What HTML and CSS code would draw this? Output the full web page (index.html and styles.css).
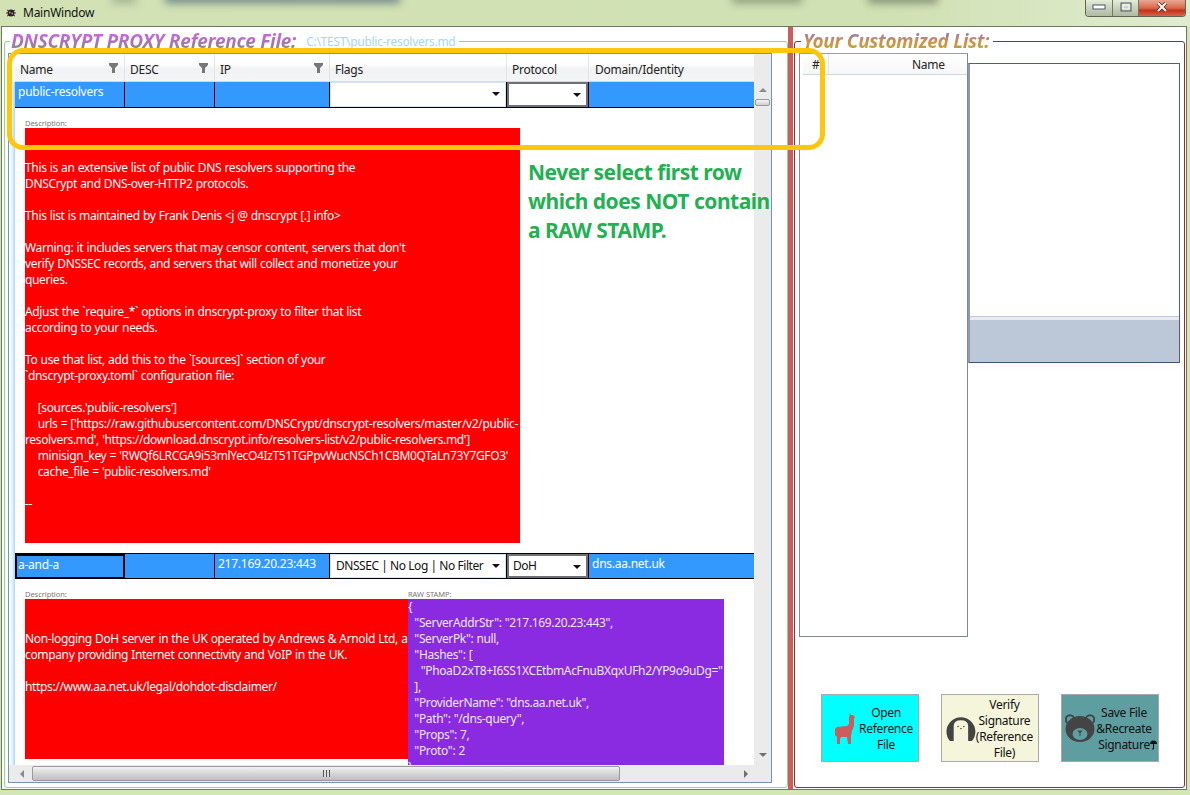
FILE: index.html
```html
<!DOCTYPE html>
<html lang="en">
<head>
    <meta charset="UTF-8">
    <title>MainWindow</title>
    <link rel="stylesheet" href="styles.css">
</head>
<body>
    <div class="titlebar">
        <span class="glass glass-d"></span>
        <span class="glass glass-a"></span>
        <span class="glass glass-b"></span>
        <span class="glass glass-c"></span>
        <svg class="app-icon" width="10" height="10" viewBox="0 0 10 10">
            <ellipse cx="5" cy="5" rx="3.4" ry="3.6" fill="#222"/>
            <path d="M1 2l2 1M9 2L7 3M0 5h2M10 5H8M1 8l2-1M9 8L7 7" stroke="#333" stroke-width="1"/>
            <circle cx="3.8" cy="4.4" r="1" fill="#e06a9a"/>
            <circle cx="6.2" cy="5.6" r="1" fill="#e06a9a"/>
        </svg>
        <span class="app-title">MainWindow</span>
        <div class="win-buttons">
            <div class="win-btn win-min">
                <svg width="14" height="6" viewBox="0 0 14 6"><rect x="1" y="1" width="12" height="4" fill="#fff" stroke="#4c566a"/></svg>
            </div>
            <div class="win-btn win-max">
                <svg width="12" height="10" viewBox="0 0 12 10"><rect x="1" y="1" width="10" height="8" fill="none" stroke="#4c566a"/><rect x="3" y="3" width="6" height="4" fill="none" stroke="#fff"/></svg>
            </div>
            <div class="win-btn win-close">
                <svg width="12" height="10" viewBox="0 0 12 10"><path d="M2 1l8 8M10 1L2 9" stroke="#5c2018" stroke-width="3.4"/><path d="M2 1l8 8M10 1L2 9" stroke="#fff" stroke-width="2"/></svg>
            </div>
        </div>
    </div>

    <div class="client">
        <fieldset class="group group-left">
            <legend class="group-legend">
                <span class="legend-text legend-left">DNSCRYPT PROXY Reference File:</span>
                <span class="legend-path">C:\TEST\public-resolvers.md</span>
            </legend>
            <div class="grid">
                <div class="grid-main">
                    <div class="cols grid-head">
                        <div class="head-cell">Name<svg class="funnel" width="10" height="10" viewBox="0 0 10 10"><path d="M0 0h9v2L6 5v5H3V5L0 2z"/></svg></div>
                        <div class="head-cell">DESC<svg class="funnel" width="10" height="10" viewBox="0 0 10 10"><path d="M0 0h9v2L6 5v5H3V5L0 2z"/></svg></div>
                        <div class="head-cell">IP<svg class="funnel" width="10" height="10" viewBox="0 0 10 10"><path d="M0 0h9v2L6 5v5H3V5L0 2z"/></svg></div>
                        <div class="head-cell">Flags</div>
                        <div class="head-cell">Protocol</div>
                        <div class="head-cell head-last">Domain/Identity</div>
                    </div>
                    <div class="rows">
                        <div class="cols row">
                            <div class="cell">public-resolvers</div>
                            <div class="cell"></div>
                            <div class="cell"></div>
                            <div class="cell cell-combo"><div class="combo combo-flags"><span class="caret"></span></div></div>
                            <div class="cell cell-combo"><div class="combo combo-proto"><span class="caret"></span></div></div>
                            <div class="cell cell-last"></div>
                        </div>
                        <div class="detail detail-first">
                            <div class="detail-col">
                                <div class="detail-label">Description:</div>
                                <div class="desc desc-long">

This is an extensive list of public DNS resolvers supporting the
DNSCrypt and DNS-over-HTTP2 protocols.

This list is maintained by Frank Denis &lt;j @ dnscrypt [.] info&gt;

Warning: it includes servers that may censor content, servers that don't
verify DNSSEC records, and servers that will collect and monetize your
queries.

Adjust the `require_*` options in dnscrypt-proxy to filter that list
according to your needs.

To use that list, add this to the `[sources]` section of your
`dnscrypt-proxy.toml` configuration file:

    [sources.'public-resolvers']
    urls = ['https://raw.githubusercontent.com/DNSCrypt/dnscrypt-resolvers/master/v2/public-
resolvers.md', 'https://download.dnscrypt.info/resolvers-list/v2/public-resolvers.md']
    minisign_key = 'RWQf6LRCGA9i53mlYecO4IzT51TGPpvWucNSCh1CBM0QTaLn73Y7GFO3'
    cache_file = 'public-resolvers.md'

--</div>
                            </div>
                        </div>
                        <div class="cols row row-second">
                            <div class="cell cell-focus">a-and-a</div>
                            <div class="cell"></div>
                            <div class="cell">217.169.20.23:443</div>
                            <div class="cell cell-combo"><div class="combo combo-flags">DNSSEC | No Log | No Filter<span class="caret"></span></div></div>
                            <div class="cell cell-combo"><div class="combo combo-proto">DoH<span class="caret"></span></div></div>
                            <div class="cell cell-last">dns.aa.net.uk</div>
                        </div>
                        <div class="detail">
                            <div class="detail-col">
                                <div class="detail-label">Description:</div>
                                <div class="desc desc-short">

Non-logging DoH server in the UK operated by Andrews &amp; Arnold Ltd, a
company providing Internet connectivity and VoIP in the UK.

https://www.aa.net.uk/legal/dohdot-disclaimer/</div>
                            </div>
                            <div class="detail-col">
                                <div class="detail-label">RAW STAMP:</div>
                                <div class="stamp">{
  "ServerAddrStr": "217.169.20.23:443",
  "ServerPk": null,
  "Hashes": [
    "PhoaD2xT8+I6SS1XCEtbmAcFnuBXqxUFh2/YP9o9uDg="
  ],
  "ProviderName": "dns.aa.net.uk",
  "Path": "/dns-query",
  "Props": 7,
  "Proto": 2
}</div>
                            </div>
                        </div>
                    </div>
                </div>
                <div class="vscroll">
                    <span class="tri tri-up"></span>
                    <span class="vthumb"></span>
                    <span class="tri tri-down"></span>
                </div>
                <div class="hscroll">
                    <span class="tri tri-left"></span>
                    <span class="hthumb"><span class="grip"></span></span>
                    <span class="tri tri-right"></span>
                </div>
                <div class="corner"></div>
            </div>
        </fieldset>

        <div class="splitter"></div>

        <fieldset class="group group-right">
            <legend class="group-legend">
                <span class="legend-text legend-right">Your Customized List:</span>
            </legend>
            <div class="lists">
                <div class="listview">
                    <div class="list-head">
                        <div class="list-num">#</div>
                        <div class="list-name">Name</div>
                    </div>
                </div>
                <div class="preview">
                    <div class="preview-top"></div>
                    <div class="preview-bottom"></div>
                </div>
            </div>
            <div class="actions">
                <div class="action action-open">
                    <svg class="action-icon" width="22" height="31" viewBox="0 0 22 31">
                        <path d="M17 0l1 2 2 0 2 2-1 2 0 7-2 5-1 5 0 8-3 0-1-7-6 0-1 2 0 5-3 0 0-7-2-2 0-6 2-2 10-1 2-2 0-6z" fill="#cd5c5c"/>
                    </svg>
                    <div class="action-label">Open Reference File</div>
                </div>
                <div class="action action-verify">
                    <svg class="action-icon" width="31" height="28" viewBox="0 0 31 28">
                        <path d="M4 27.5A15 15 0 1 1 27 27.5z" fill="#444"/>
                        <path d="M8 28V12q0-6 7.5-6T23 12v16z" fill="#f5f5dc"/>
                        <circle cx="12.5" cy="12.5" r="0.8" fill="#444"/>
                        <circle cx="18.5" cy="12.5" r="0.8" fill="#444"/>
                        <path d="M14.5 14h2l-1 1.5z" fill="#444"/>
                    </svg>
                    <div class="action-label">Verify Signature (Reference File)</div>
                </div>
                <div class="action action-save">
                    <svg class="action-icon" width="30" height="28" viewBox="0 0 30 28">
                        <circle cx="5" cy="5.5" r="4.2" fill="none" stroke="#444" stroke-width="2"/>
                        <circle cx="25" cy="5.5" r="4.2" fill="none" stroke="#444" stroke-width="2"/>
                        <ellipse cx="15" cy="15" rx="14.5" ry="13" fill="#444"/>
                        <ellipse cx="15" cy="20" rx="7.5" ry="6" fill="#5f9ea0"/>
                        <path d="M12.5 16.5h5L15 20z" fill="#444"/>
                        <path d="M15 20v2" stroke="#444"/>
                    </svg>
                    <div class="action-label">Save File &amp;Recreate Signature<svg class="umbrella" width="7" height="10" viewBox="0 0 7 10"><path d="M0 4a3.5 3.5 0 0 1 7 0z" fill="#111"/><path d="M3.5 4v5H2" fill="none" stroke="#111"/></svg></div>
                </div>
            </div>
        </fieldset>
    </div>

    <!-- notes drawn on top of the screenshot -->
    <div class="note">Never select first row<br>which does NOT contain<br>a RAW STAMP.</div>
    <div class="callout"></div>
</body>
</html>
```

FILE: styles.css
```css
* {
    box-sizing: border-box;
}
html, body {
    height: 100%;
}
body {
    position: relative;
    margin: 0;
    height: 795px;
    overflow: hidden;
    font-family: "Noto Sans", sans-serif;
    font-size: 12px;
    color: #111;
    background: #d4e5b7;
}

/* title bar */
.titlebar {
    position: relative;
    display: flex;
    align-items: center;
    height: 26px;
    padding-left: 6px;
    overflow: hidden;
    background: linear-gradient(to right, #d2e2b5 0%, #d0e1b3 75%, #e1ebd0 100%);
}
.glass {
    position: absolute;
    top: -6px;
    height: 9px;
    filter: blur(4px);
    background: #6d8088;
}
.glass-a {
    left: 165px;
    width: 235px;
}
.glass-b {
    left: 732px;
    width: 70px;
    background: #8a9a7a;
}
.glass-c {
    left: 868px;
    width: 70px;
    background: #7c8a70;
}
.glass-d {
    left: 112px;
    width: 24px;
    background: #a0b090;
}
.app-icon {
    margin-right: 7px;
}
.app-title {
    padding-bottom: 1px;
    font-size: 12px;
    letter-spacing: -0.25px;
    color: #111;
}
.win-buttons {
    position: absolute;
    top: 0;
    right: 4px;
    display: flex;
    height: 17px;
    border: 1px solid #5b6652;
    border-top: none;
    border-radius: 0 0 4px 4px;
    overflow: hidden;
}
.win-btn {
    display: flex;
    align-items: center;
    justify-content: center;
    padding-bottom: 2px;
}
.win-min {
    width: 27px;
    border-right: 1px solid #6d7a62;
    background: linear-gradient(#e6edda, #c4cfb6 55%, #aebaa2);
}
.win-max {
    width: 26px;
    border-right: 1px solid #6d7a62;
    background: linear-gradient(#e6edda, #c4cfb6 55%, #aebaa2);
}
.win-close {
    width: 46px;
    background: linear-gradient(#eba892, #d9674c 50%, #c1331a 65%, #d9644a);
}

/* main area */
.client {
    display: flex;
    width: 1186px;
    height: 764px;
    margin-left: 1px;
    padding-left: 2px;
    border: 1px solid #6d7863;
    background: #fff;
}
.group {
    min-width: 0;
    margin: 2px 0 0;
    border-radius: 3px;
}
.group-left {
    flex: 0 0 784px;
    height: 759px;
    padding: 0 14px 0 3px;
    border: 1px solid #84dc8c;
}
.group-right {
    flex: 0 0 391px;
    height: 759px;
    margin-left: 1px;
    padding: 0 3px;
    border: 1px solid #b22222;
}
.group-legend {
    display: flex;
    align-items: center;
    height: 24px;
    padding: 0 4px 0 1px;
    margin-left: 2px;
}
.group-right .group-legend {
    margin-left: 3px;
    padding: 0 4px 0 2px;
}
.legend-text {
    font-size: 19px;
    font-weight: 700;
    font-style: italic;
    letter-spacing: -0.3px;
    white-space: nowrap;
    color: transparent;
    -webkit-background-clip: text;
    background-clip: text;
}
.legend-left {
    background-image: linear-gradient(#c468dc 30%, #a873b4 55%, #7f9a70 85%);
}
.legend-right {
    background-image: linear-gradient(#9a7fa8 25%, #d8913c 55%, #a8a848 85%);
}
.legend-path {
    margin-left: 10px;
    font-size: 12px;
    letter-spacing: -0.3px;
    color: #a8d6f6;
}
.splitter {
    flex: 0 0 5px;
    background: #cd5c5c;
}

/* data grid */
.grid {
    display: grid;
    grid-template-columns: 745px 17px;
    grid-template-rows: 711px 17px;
    width: 764px;
    height: 730px;
    border: 1px solid #7394b4;
}
.grid-main {
    overflow: hidden;
}
.cols {
    display: grid;
    grid-template-columns: 110px 90px 115px 177px 82px 165px;
}
.grid-head {
    height: 28px;
    margin-left: 6px;
    border-bottom: 1px solid #d5d8dc;
    background: linear-gradient(#fff 35%, #f1f2f4 55%, #f4f5f7);
}
.head-cell {
    position: relative;
    padding: 8px 0 0 5px;
    line-height: 16px;
    letter-spacing: -0.25px;
    color: #222;
    border-right: 1px solid #e3e4e6;
}
.head-last {
    padding-left: 6px;
    border-right: none;
}
.funnel {
    position: absolute;
    top: 9px;
    right: 5px;
    fill: #777;
}
.rows {
    padding-left: 6px;
    background: linear-gradient(to right, #fff, #e4f2fb 55%, #a6d8f6) 0 0 / 6px 100% no-repeat;
}
.row {
    height: 26px;
    border-bottom: 1px solid #000;
    background: #3399ff;
}
.row-second {
    border-top: 1px solid #000;
}
.cell {
    padding: 2px 3px;
    line-height: 16px;
    letter-spacing: -0.25px;
    color: #fff;
    border-right: 1px solid #000;
}
.cell-combo {
    padding: 0;
}
.cell-last {
    border-right: none;
}
.cell-focus {
    margin-bottom: -1px;
    border: 2px solid #000;
    padding: 1px;
}
.combo {
    position: relative;
    height: 100%;
    padding: 3px 0 0 5px;
    line-height: 16px;
    letter-spacing: -0.45px;
    color: #111;
    background: #fff;
}
.combo-flags {
    border: 1px solid #d2e6fa;
}
.combo-proto {
    border: 2px solid #6e7278;
    padding: 2px 0 0 4px;
}
.caret {
    position: absolute;
    top: 9px;
    right: 5px;
    border-left: 4px solid transparent;
    border-right: 4px solid transparent;
    border-top: 4px solid #111;
}
.detail {
    display: flex;
    padding: 10px 0 0 10px;
    background: #fff;
}
.detail-first {
    padding-bottom: 10px;
}
.detail-label {
    height: 10px;
    font-size: 7.5px;
    line-height: 10px;
    letter-spacing: -0.05px;
    color: #777;
}
.desc {
    line-height: 16px;
    letter-spacing: -0.35px;
    word-spacing: 0.4px;
    white-space: pre;
    overflow: hidden;
    color: #fff;
    background: #ff0000;
}
.desc-long {
    width: 495px;
    height: 415px;
}
.desc-short {
    width: 383px;
    height: 160px;
}
.stamp {
    width: 316px;
    height: 176px;
    line-height: 16px;
    letter-spacing: -0.35px;
    word-spacing: 0.4px;
    white-space: pre;
    overflow: hidden;
    color: #efe4fa;
    background: #8a2be2;
}

/* scroll bars */
.vscroll {
    display: flex;
    flex-direction: column;
    align-items: center;
    padding-top: 34px;
    background: #ebebeb;
}
.vthumb {
    width: 15px;
    height: 7px;
    margin-top: 7px;
    border: 1px solid #9a9a9a;
    border-radius: 2px;
    background: linear-gradient(#f4f4f4, #cfcfcf);
}
.hscroll {
    display: flex;
    align-items: center;
    background: #ebebeb;
}
.hthumb {
    display: flex;
    align-items: center;
    justify-content: center;
    width: 588px;
    height: 15px;
    margin-left: 8px;
    border: 1px solid #9a9a9a;
    border-radius: 2px;
    background: linear-gradient(#f2f2f2, #d6d6d6 50%, #bfbfbf);
}
.grip {
    width: 7px;
    height: 7px;
    background: repeating-linear-gradient(to right, #555 0 1px, #ddd 1px 3px);
}
.corner {
    background: #ebebeb;
}
.tri {
    width: 0;
    height: 0;
}
.tri-up {
    border-left: 4px solid transparent;
    border-right: 4px solid transparent;
    border-bottom: 4px solid #8a8a8a;
}
.tri-down {
    margin-top: 647px;
    border-left: 4px solid transparent;
    border-right: 4px solid transparent;
    border-top: 4px solid #707070;
}
.tri-left {
    margin-left: 11px;
    border-top: 4px solid transparent;
    border-bottom: 4px solid transparent;
    border-right: 4px solid #8a8a8a;
}
.tri-right {
    margin-left: 124px;
    border-top: 4px solid transparent;
    border-bottom: 4px solid transparent;
    border-left: 4px solid #707070;
}

/* right side */
.lists {
    display: flex;
    align-items: flex-start;
    margin-left: 1px;
}
.listview {
    width: 169px;
    height: 584px;
    padding: 0 0 0 3px;
    border: 1px solid #828790;
    border-top-color: #9a9ea6;
}
.list-head {
    display: flex;
    height: 21px;
    line-height: 21px;
    letter-spacing: -0.25px;
    color: #222;
    border-bottom: 1px solid #d5d5d5;
    background: linear-gradient(#fff, #f6f7f9);
}
.list-num {
    width: 26px;
    padding-left: 9px;
    border-right: 1px solid #e3e4e6;
}
.list-name {
    padding-left: 83px;
}
.preview {
    display: flex;
    flex-direction: column;
    width: 212px;
    height: 300px;
    margin-top: 10px;
    border: 1px solid #4f5f7e;
    border-left: 2px solid #8a9ab4;
    border-bottom: 1px solid #3f5578;
}
.preview-top {
    height: 252px;
}
.preview-bottom {
    flex: 1;
    border-top: 1px solid #c2cddb;
    background: linear-gradient(#e8ebf0 0 3px, #bcc8d8 3px);
}
.actions {
    display: flex;
    gap: 22px;
    margin: 57px 0 0 23px;
}
.action {
    display: flex;
    align-items: center;
    width: 98px;
    height: 68px;
    border: 1px solid #a9a9a9;
    line-height: 16px;
    text-align: center;
    letter-spacing: -0.3px;
}
.action-label {
    flex: 1;
    padding-top: 2px;
}
.action-open {
    background: #00ffff;
}
.action-open .action-icon {
    margin-left: 11px;
}
.action-open .action-label {
    margin-right: 1px;
}
.action-verify {
    background: #f5f5dc;
}
.action-verify .action-icon {
    margin-left: 4px;
}
.action-verify .action-label {
    margin-right: 5px;
}
.action-save {
    background: #5f9ea0;
}
.action-save .action-icon {
    margin-left: 3px;
}
.action-save .action-label {
    margin-right: 5px;
}
.umbrella {
    vertical-align: -1px;
    margin-right: -7px;
}

/* annotations */
.note {
    position: absolute;
    left: 528px;
    top: 158px;
    font-size: 21px;
    font-weight: 700;
    line-height: 29px;
    letter-spacing: -0.5px;
    white-space: nowrap;
    color: #1fb152;
}
.callout {
    position: absolute;
    left: 7px;
    top: 48px;
    width: 818px;
    height: 102px;
    border: 5px solid #ffc60b;
    border-radius: 16px;
    pointer-events: none;
}
```
